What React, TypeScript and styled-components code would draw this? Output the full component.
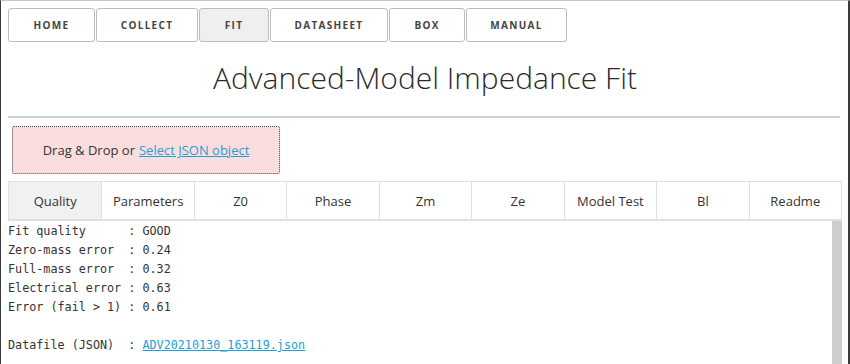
import React, { FC, useState } from "react";
import styled, { createGlobalStyle } from "styled-components";

const GlobalStyle = createGlobalStyle`
  html, body {
    margin: 0;
    padding: 0;
    background: #fff;
  }
  body {
    font-family: "Open Sans", "Liberation Sans", sans-serif;
    color: #333;
  }
`;

const Frame = styled.div`
  box-sizing: border-box;
  width: 850px;
  height: 364px;
  overflow: hidden;
  border-top: 1px solid #c4c4c4;
  border-left: 1px solid #3a3a3a;
  border-right: 2px solid #3a3a3a;
  padding: 7px 6px 0 7px;
`;

const NavBar = styled.nav`
  display: flex;
  gap: 1px;
`;

const NavButton = styled.button<{ $w: number; $active?: boolean }>`
  width: ${(p) => p.$w}px;
  height: 34px;
  padding: 0;
  border: 1px solid #bdbdbd;
  border-radius: 3px;
  background: ${(p) => (p.$active ? "#efefef" : "#fff")};
  font-family: "Open Sans", "Liberation Sans", sans-serif;
  font-weight: 700;
  font-size: 10px;
  letter-spacing: 1.3px;
  color: #444;
  cursor: pointer;
`;

const Title = styled.h1`
  margin: 14px 0 0;
  text-align: center;
  font-family: "Open Sans Light", "Open Sans", "Liberation Sans", sans-serif;
  font-weight: 300;
  font-size: 30px;
  line-height: 44px;
  color: #2a2a2a;
`;

const Rule = styled.hr`
  margin: 16px 2px 0 0;
  border: 0;
  border-top: 2px solid #cfcfcf;
`;

const DropZone = styled.div`
  box-sizing: border-box;
  width: 268px;
  height: 48px;
  margin: 8px 0 0 4px;
  background: #fadede;
  border: 1px dotted #444;
  border-radius: 2px;
  display: flex;
  align-items: center;
  justify-content: center;
  font-size: 13px;
  color: #333;
`;

const SelectLink = styled.a`
  margin-left: 4px;
  color: #1fa0d8;
  text-decoration: underline;
  cursor: pointer;
`;

const Tabs = styled.div`
  display: grid;
  grid-template-columns: repeat(9, 1fr);
  margin-top: 7px;
  border: 1px solid #e0e0e0;
  border-bottom-width: 2px;
`;

const Tab = styled.div<{ $active?: boolean }>`
  height: 37px;
  display: flex;
  align-items: center;
  justify-content: center;
  font-size: 13px;
  color: #333;
  background: ${(p) => (p.$active ? "#f0f1f3" : "#fff")};
  cursor: pointer;
  & + & {
    border-left: 1px solid #e0e0e0;
  }
`;

const Content = styled.div`
  display: flex;
`;

const Report = styled.pre`
  flex: 1;
  margin: 0;
  padding-top: 1px;
  font-family: "DejaVu Sans Mono", "Liberation Mono", monospace;
  font-size: 11.75px;
  line-height: 19px;
  color: #333;
`;

const ReportLink = styled.a`
  color: #1fa0d8;
  text-decoration: underline;
`;

const Scrollbar = styled.div`
  width: 10px;
  height: 160px;
  background: #cdcdcd;
`;

const navItems: [string, number][] = [
  ["HOME", 87],
  ["COLLECT", 102],
  ["FIT", 70],
  ["DATASHEET", 118],
  ["BOX", 76],
  ["MANUAL", 101],
];
const tabItems = ["Quality", "Parameters", "Z0", "Phase", "Zm", "Ze", "Model Test", "Bl", "Readme"];

const App: FC = () => {
  const [tab, setTab] = useState("Quality");

  return (
    <>
      <GlobalStyle />
      <Frame>
        <NavBar>
          {navItems.map(([item, w]) => (
            <NavButton key={item} $w={w} $active={item === "FIT"}>
              {item}
            </NavButton>
          ))}
        </NavBar>
        <Title>Advanced-Model Impedance Fit</Title>
        <Rule />
        <DropZone>
          Drag &amp; Drop or <SelectLink>Select JSON object</SelectLink>
        </DropZone>
        <Tabs>
          {tabItems.map((item) => (
            <Tab key={item} $active={item === tab} onClick={() => setTab(item)}>
              {item}
            </Tab>
          ))}
        </Tabs>
        <Content>
          <Report>
            {"Fit quality      : GOOD\n"}
            {"Zero-mass error  : 0.24\n"}
            {"Full-mass error  : 0.32\n"}
            {"Electrical error : 0.63\n"}
            {"Error (fail > 1) : 0.61\n"}
            {"\n"}
            {"Datafile (JSON)  : "}
            <ReportLink>ADV20210130_163119.json</ReportLink>
          </Report>
          <Scrollbar />
        </Content>
      </Frame>
    </>
  );
};

export default App;
